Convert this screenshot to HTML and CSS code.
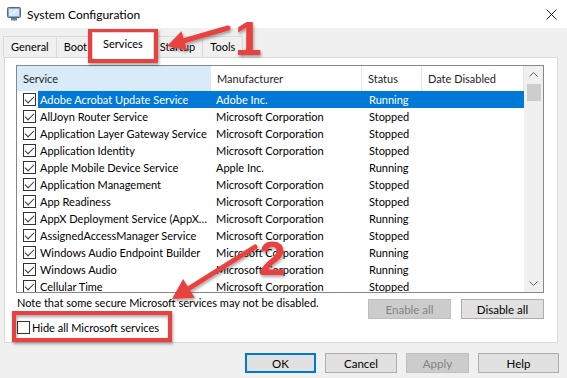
FILE: index.html
```html
<!DOCTYPE html>
<html lang="en">
<head>
    <meta charset="UTF-8">
    <title>System Configuration</title>
    <link rel="stylesheet" href="styles.css">
</head>
<body>
<div class="window">
    <div class="titlebar">
        <svg class="app-icon" width="14" height="14" viewBox="0 0 14 14">
            <rect x="0.5" y="0.5" width="13" height="10" rx="1" fill="#8ea5c2" stroke="#4d6a90"/>
            <rect x="2" y="2" width="10" height="7" fill="#cfe6fb"/>
            <path d="M3 8 L10 3" stroke="#ffffff" stroke-width="1"/>
            <rect x="4" y="11" width="6" height="2.5" fill="#6b8099"/>
        </svg>
        <span class="title">System Configuration</span>
        <svg class="close" width="11" height="11" viewBox="0 0 11 11">
            <path d="M0.5 0.5 L10.5 10.5 M10.5 0.5 L0.5 10.5" stroke="#1a1a1a" stroke-width="1"/>
        </svg>
    </div>

    <div class="tabs">
        <div class="tab">General</div>
        <div class="tab">Boot</div>
        <div class="tab active">Services</div>
        <div class="tab">Startup</div>
        <div class="tab">Tools</div>
    </div>

    <div class="panel">
        <div class="list">
            <div class="cols">
                <div class="head">
                    <div class="hot">Service</div>
                    <div>Manufacturer</div>
                    <div>Status</div>
                    <div>Date Disabled</div>
                </div>
                <div class="row sel"><span class="chk"><i class="cb on"></i></span><span>Adobe Acrobat Update Service</span><span class="mf">Adobe Inc.</span><span class="st">Running</span><span></span></div>
                <div class="row"><span class="chk"><i class="cb on"></i></span><span>AllJoyn Router Service</span><span class="mf">Microsoft Corporation</span><span class="st">Stopped</span><span></span></div>
                <div class="row"><span class="chk"><i class="cb on"></i></span><span>Application Layer Gateway Service</span><span class="mf">Microsoft Corporation</span><span class="st">Stopped</span><span></span></div>
                <div class="row"><span class="chk"><i class="cb on"></i></span><span>Application Identity</span><span class="mf">Microsoft Corporation</span><span class="st">Stopped</span><span></span></div>
                <div class="row"><span class="chk"><i class="cb on"></i></span><span>Apple Mobile Device Service</span><span class="mf">Apple Inc.</span><span class="st">Running</span><span></span></div>
                <div class="row"><span class="chk"><i class="cb on"></i></span><span>Application Management</span><span class="mf">Microsoft Corporation</span><span class="st">Stopped</span><span></span></div>
                <div class="row"><span class="chk"><i class="cb on"></i></span><span>App Readiness</span><span class="mf">Microsoft Corporation</span><span class="st">Stopped</span><span></span></div>
                <div class="row"><span class="chk"><i class="cb on"></i></span><span>AppX Deployment Service (AppX…</span><span class="mf">Microsoft Corporation</span><span class="st">Running</span><span></span></div>
                <div class="row"><span class="chk"><i class="cb on"></i></span><span>AssignedAccessManager Service</span><span class="mf">Microsoft Corporation</span><span class="st">Stopped</span><span></span></div>
                <div class="row"><span class="chk"><i class="cb on"></i></span><span>Windows Audio Endpoint Builder</span><span class="mf">Microsoft Corporation</span><span class="st">Running</span><span></span></div>
                <div class="row"><span class="chk"><i class="cb on"></i></span><span>Windows Audio</span><span class="mf">Microsoft Corporation</span><span class="st">Running</span><span></span></div>
                <div class="row"><span class="chk"><i class="cb on"></i></span><span>Cellular Time</span><span class="mf">Microsoft Corporation</span><span class="st">Stopped</span><span></span></div>
            </div>
            <div class="scrollbar">
                <div class="sb-btn">
                    <svg width="9" height="5" viewBox="0 0 9 5"><path d="M0.5 4.5 L4.5 0.5 L8.5 4.5" fill="none" stroke="#606060"/></svg>
                </div>
                <div class="thumb"></div>
                <div class="track"></div>
                <div class="sb-btn">
                    <svg width="9" height="5" viewBox="0 0 9 5"><path d="M0.5 0.5 L4.5 4.5 L8.5 0.5" fill="none" stroke="#606060"/></svg>
                </div>
            </div>
        </div>

        <div class="note-row">
            <p class="note">Note that some secure Microsoft services may not be disabled.</p>
            <button class="btn small" disabled>Enable all</button>
            <button class="btn small">Disable all</button>
        </div>

        <label class="hide"><i class="cb"></i>Hide all Microsoft services</label>
    </div>

    <div class="actions">
        <button class="btn ok">OK</button>
        <button class="btn cancel">Cancel</button>
        <button class="btn apply" disabled>Apply</button>
        <button class="btn help">Help</button>
    </div>

    <!-- annotations drawn over the dialog -->
    <svg class="marks" width="567" height="378" viewBox="0 0 567 378">
        <defs>
            <filter id="shadow" x="-20%" y="-20%" width="140%" height="140%">
                <feDropShadow dx="1" dy="2" stdDeviation="1.5" flood-color="#000" flood-opacity="0.35"/>
            </filter>
        </defs>
        <g filter="url(#shadow)">
            <rect x="90" y="31" width="66" height="30" fill="none" stroke="#e9413f" stroke-width="4"/>
            <rect x="14" y="313" width="156" height="27" fill="none" stroke="#e9413f" stroke-width="4"/>
            <line x1="228" y1="28" x2="183" y2="41" stroke="#e9413f" stroke-width="5" stroke-linecap="round"/>
            <polygon points="167,46 187.1,50.5 181.5,31.3" fill="#e9413f"/>
            <line x1="255" y1="247" x2="188" y2="289" stroke="#e9413f" stroke-width="5" stroke-linecap="round"/>
            <polygon points="172,299 194.8,297.7 183.1,279" fill="#e9413f"/>
            <text class="num" x="235" y="55">1</text>
            <text class="num" x="259" y="275">2</text>
        </g>
    </svg>
</div>
</body>
</html>
```

FILE: styles.css
```css
body {
    margin: 0;
    background-color: #f0f0f0;
    font-family: Lato, "Noto Sans", sans-serif;
    font-size: 11px;
    color: #000;
}
.window {
    position: relative;
    width: 567px;
    height: 378px;
    overflow: hidden;
}
.titlebar {
    height: 28px;
    background-color: #fff;
    display: flex;
    align-items: center;
    padding: 0 10px 0 7px;
}
.app-icon {
    margin-right: 6px;
}
.title {
    flex: 1;
    font-size: 12px;
}
.tabs {
    display: flex;
    align-items: flex-end;
    height: 29px;
    padding-left: 3px;
}
.tab {
    height: 21px;
    box-sizing: border-box;
    border: 1px solid #d9d9d9;
    border-bottom: none;
    margin-right: -1px;
    padding: 0 7px;
    line-height: 19px;
    background-color: #f0f0f0;
}
.tab.active {
    position: relative;
    z-index: 1;
    height: 26px;
    margin: 0 -2px -1px -2px;
    padding: 0 10px;
    line-height: 22px;
    background-color: #fff;
}
.panel {
    height: 286px;
    box-sizing: border-box;
    margin: 0 9px 0 4px;
    padding: 7px 13px 0 11px;
    background-color: #fff;
    border: 1px solid #d9d9d9;
}
.list {
    display: flex;
    height: 228px;
    box-sizing: border-box;
    border: 1px solid #828790;
    overflow: hidden;
}
.cols {
    flex: 1;
}
.head,
.row {
    display: grid;
    grid-template-columns: 21px 173px 151px 60px 1fr;
}
.head {
    height: 25px;
    line-height: 25px;
    color: #1e1e1e;
}
.head div {
    padding-left: 6px;
    border-right: 1px solid #e5e5e5;
}
.head .hot {
    grid-column: span 2;
    background-color: #d9ebf9;
}
.row {
    height: 17px;
    line-height: 17px;
}
.row span {
    white-space: nowrap;
    overflow: hidden;
    padding-left: 2px;
}
.row .chk {
    display: flex;
    align-items: center;
    padding-left: 6px;
}
.row .mf {
    padding-left: 5px;
}
.row .st {
    padding-left: 7px;
}
.row.sel span:not(.chk) {
    background-color: #0078d7;
    color: #fff;
}
.cb {
    position: relative;
    display: block;
    width: 13px;
    height: 13px;
    box-sizing: border-box;
    border: 1px solid #333;
    background-color: #fff;
}
.cb.on::after {
    content: "";
    position: absolute;
    left: 3px;
    top: 0px;
    width: 4px;
    height: 8px;
    border: solid #333;
    border-width: 0 1px 1px 0;
    transform: rotate(45deg);
}
.scrollbar {
    width: 19px;
    display: flex;
    flex-direction: column;
    background-color: #f0f0f0;
}
.sb-btn {
    height: 17px;
    display: flex;
    align-items: center;
    justify-content: center;
}
.thumb {
    height: 17px;
    margin: 1px 2px 0 3px;
    background-color: #cdcdcd;
}
.track {
    flex: 1;
}
.note-row {
    display: flex;
    height: 20px;
    margin-top: 6px;
}
.note {
    flex: 1;
    margin: -3px 0 0 1px;
    line-height: 14px;
}
.btn {
    height: 20px;
    box-sizing: border-box;
    padding: 0;
    border: 1px solid #adadad;
    background-color: #e1e1e1;
    font-family: inherit;
    font-size: 11.5px;
    color: #000;
}
.btn:disabled {
    background-color: #cccccc;
    border-color: #bfbfbf;
    color: #838383;
}
.btn.small {
    width: 83px;
    margin-left: 10px;
}
.hide {
    display: flex;
    align-items: center;
    gap: 2px;
    height: 13px;
    margin: 2px 0 0 1px;
}
.actions {
    display: flex;
    justify-content: flex-end;
    gap: 9px;
    margin-top: 10px;
    padding-right: 8px;
}
.btn.ok {
    width: 71px;
    border: 2px solid #0078d7;
}
.btn.cancel {
    width: 72px;
}
.btn.apply {
    width: 63px;
}
.btn.help {
    width: 81px;
}
.marks {
    position: absolute;
    top: 0;
    left: 0;
    pointer-events: none;
}
.num {
    font-family: "Liberation Sans", sans-serif;
    font-weight: bold;
    font-size: 48px;
    fill: #e9413f;
}
```
